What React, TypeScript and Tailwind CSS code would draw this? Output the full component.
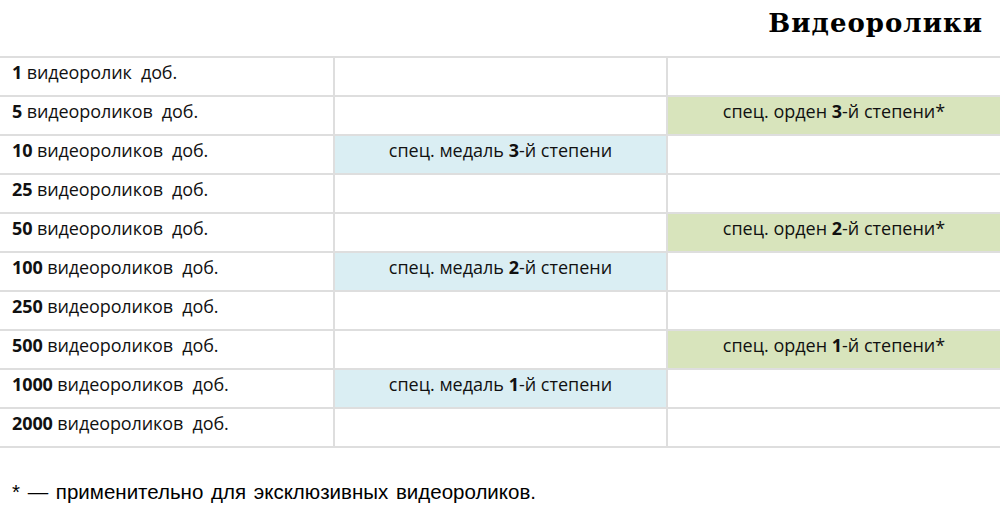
const rows: { n: string; word: string; medal?: string; order?: string }[] = [
  { n: '1', word: 'видеоролик' },
  { n: '5', word: 'видеороликов', order: '3' },
  { n: '10', word: 'видеороликов', medal: '3' },
  { n: '25', word: 'видеороликов' },
  { n: '50', word: 'видеороликов', order: '2' },
  { n: '100', word: 'видеороликов', medal: '2' },
  { n: '250', word: 'видеороликов' },
  { n: '500', word: 'видеороликов', order: '1' },
  { n: '1000', word: 'видеороликов', medal: '1' },
  { n: '2000', word: 'видеороликов' },
]

const cell = 'h-[39px] border-b-2 border-[#dedede] pt-[3px] text-[18px] leading-[22px] text-[#111]'

export default function App() {
  return (
    <div className="w-[1000px] h-[510px] bg-white overflow-hidden">
      <div className="h-[58px] border-b-2 border-[#dedede] flex justify-end items-start pr-[17px] pt-[6px]">
        <h1 className="text-[26px] leading-[34px] font-bold text-black tracking-[1px] [font-family:'DejaVu_Serif',serif]">
          Видеоролики
        </h1>
      </div>

      <div className="grid grid-cols-[335px_333px_1fr] [font-family:'Open_Sans',sans-serif]">
        {rows.map(r => (
          <div key={r.n} className="contents">
            <div className={`${cell} pl-[12px] border-r-2 tracking-[-0.1px]`}>
              <span className="font-bold">{r.n}</span> {r.word}&nbsp; доб.
            </div>
            <div className={`${cell} border-r-2 text-center ${r.medal ? 'bg-[#daeef3]' : ''}`}>
              {r.medal && (
                <>
                  спец. медаль <span className="font-bold">{r.medal}</span>-й степени
                </>
              )}
            </div>
            <div className={`${cell} text-center ${r.order ? 'bg-[#d8e4bc]' : ''}`}>
              {r.order && (
                <>
                  спец. орден <span className="font-bold">{r.order}</span>-й степени*
                </>
              )}
            </div>
          </div>
        ))}
      </div>

      <p className="mt-[32px] pl-[12px] text-[20.5px] leading-[24px] text-black [word-spacing:2px] [font-family:'Liberation_Sans',Arial,sans-serif]">
        * — применительно для эксклюзивных видеороликов.
      </p>
    </div>
  )
}
